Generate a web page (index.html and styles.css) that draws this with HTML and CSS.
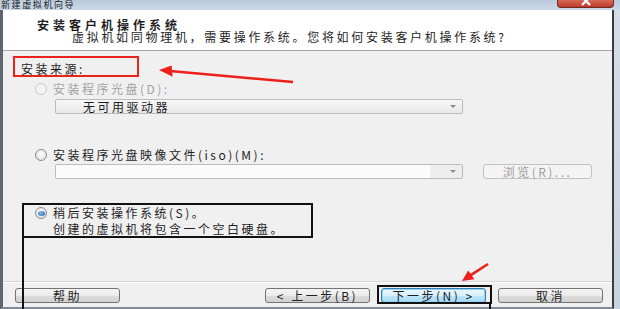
FILE: index.html
```html
<!DOCTYPE html>
<html lang="zh-CN">
<head>
  <meta charset="UTF-8" />
  <title>新建虚拟机向导</title>
  <link rel="stylesheet" href="styles.css">
</head>
<body>

  <div class="window">
    <!-- title bar -->
    <div class="titlebar">
      <span class="caption">新建虚拟机向导</span>
      <span class="close">
        <svg width="14" height="8" viewBox="0 0 14 8"><path d="M3 -3 L11 5 M11 -3 L3 5" stroke="#fff" stroke-width="2.2"/></svg>
      </span>
    </div>

    <div class="client">
      <div class="header">
        <div class="h-title">安装客户机操作系统</div>
        <div class="h-sub">虚拟机如同物理机，需要操作系统。您将如何安装客户机操作系统?</div>
      </div>

      <div class="content">
        <div class="section-label">安装来源:</div>

        <div class="option disabled"><span class="radio"></span>安装程序光盘(D):</div>
        <div class="combo">
          <span class="combo-text">无可用驱动器</span>
          <span class="caret"></span>
        </div>

        <div class="option opt-iso"><span class="radio"></span>安装程序光盘映像文件(iso)(M):</div>
        <div class="combo-row">
          <div class="combo editable"><span class="combo-text"></span><span class="caret"></span></div>
          <div class="btn browse">浏览(R)...</div>
        </div>

        <div class="option opt-later"><span class="radio checked"></span>稍后安装操作系统(S)。</div>
        <div class="option-note">创建的虚拟机将包含一个空白硬盘。</div>
      </div>

      <div class="footer">
        <div class="btn">帮助</div>
        <div class="spacer"></div>
        <div class="btn">&lt; 上一步(B)</div>
        <div class="btn default">下一步(N) &gt;</div>
        <div class="btn">取消</div>
      </div>
    </div>

    <!-- annotations drawn over the screenshot -->
    <div class="mark-red"></div>
    <div class="mark-box box-later"></div>
    <div class="mark-line line-later"></div>
    <div class="mark-box box-next"></div>
    <div class="mark-line line-next"></div>
    <svg class="arrows" width="620" height="309" viewBox="0 0 620 309">
      <line x1="293" y1="82" x2="170" y2="71" stroke="#ee1f1a" stroke-width="2.6"/>
      <polygon points="159,70 171.6,65.4 172.6,76.8" fill="#ee1f1a"/>
      <line x1="488" y1="264" x2="470" y2="275.6" stroke="#ee1f1a" stroke-width="2.6"/>
      <polygon points="462,281 474.4,279.2 468.2,270.4" fill="#ee1f1a"/>
    </svg>
  </div>

</body>
</html>
```

FILE: styles.css
```css
/* === PAGE === */
body {
  margin: 0;
  background: #d9e2ec;
  font-family: "Noto Sans CJK SC", "DejaVu Sans", sans-serif;
  font-size: 12px;
  color: #1e1e1e;
}

.window {
  position: relative;
  width: 620px;
  height: 309px;
  display: flex;
  flex-direction: column;
  background: linear-gradient(#d3deea, #c6d3e1);
  overflow: hidden;
}

/* === TITLE BAR === */
.titlebar {
  height: 10px;
  display: flex;
  align-items: flex-start;
  background: linear-gradient(#bccbdc, #cbd8e6);
}

.caption {
  font-size: 9px;
  line-height: 10px;
  margin-left: 1px;
  letter-spacing: 1.6px;
  color: #1a1a1a;
}

.close {
  margin-left: auto;
  margin-right: 6px;
  width: 57px;
  height: 8px;
  display: flex;
  justify-content: center;
  background: linear-gradient(#d66a56, #c0392b);
  border: 1px solid #6f2a22;
  border-top: none;
  border-radius: 0 0 4px 4px;
  box-sizing: border-box;
}

/* === CLIENT AREA === */
.client {
  flex: 1;
  display: flex;
  flex-direction: column;
  margin-right: 6px;
  background: #f0f0f0;
  border-left: 3px solid #5d6671;
  border-right: 2px solid #3b3b3b;
  border-bottom: 2px solid #7d8a98;
}

.header {
  height: 40px;
  background: #fff;
  border-bottom: 1px solid #a7a7a7;
  padding-left: 34px;
}

.h-title {
  font-weight: bold;
  font-size: 12px;
  letter-spacing: 4px;
  line-height: 13px;
  margin-top: 8px;
}

.h-sub {
  margin-left: 35px;
  line-height: 12px;
  letter-spacing: 2.7px;
}

.content {
  flex: 1;
  padding: 11px 0 0 18px;
  letter-spacing: 2.5px;
}

.section-label {
  line-height: 14px;
}

.option {
  display: flex;
  align-items: center;
  margin-left: 14px;
  line-height: 14px;
  margin-top: 6px;
}

.option.disabled { color: #a3a3a3; }
.option.opt-iso { margin-top: 34px; }
.option.opt-later { margin-top: 27px; }

.radio {
  width: 12px;
  height: 12px;
  box-sizing: border-box;
  border-radius: 50%;
  border: 1px solid #8c8c8c;
  background: radial-gradient(circle at 50% 40%, #ffffff, #d8d8d8);
  margin-right: 6px;
  display: flex;
  align-items: center;
  justify-content: center;
}

.option.disabled .radio {
  border-color: #cacaca;
  background: #f3f3f3;
}

.radio.checked::after {
  content: "";
  width: 7px;
  height: 5px;
  border-radius: 50%;
  background: radial-gradient(circle at 40% 35%, #7fc0ee, #1c5fa8);
}

.combo {
  display: flex;
  align-items: center;
  width: 408px;
  height: 15px;
  margin: 3px 0 0 34px;
  box-sizing: border-box;
  border: 1px solid #bcbcbc;
  border-radius: 2px;
  background: linear-gradient(#f7f7f7, #e8e8e8);
}

.combo-text {
  flex: 1;
  padding-left: 27px;
  line-height: 13px;
}

.caret {
  width: 0;
  height: 0;
  margin-right: 6px;
  border-left: 3px solid transparent;
  border-right: 3px solid transparent;
  border-top: 3px solid #8a8a8a;
}

.combo-row {
  display: flex;
  align-items: center;
  margin-top: 2px;
}

.combo-row .combo { margin-top: 0; }
.combo.editable { background: linear-gradient(90deg, #fbfbfb 92%, #eeeeee 92%); }

.option-note {
  margin: 2px 0 0 32px;
  line-height: 14px;
}

/* === BUTTONS === */
.btn {
  width: 105px;
  height: 15px;
  box-sizing: border-box;
  border: 1px solid #737373;
  border-radius: 3px;
  background: linear-gradient(#f4f4f4 0%, #ebebeb 50%, #dcdcdc 51%, #d2d2d2 100%);
  text-align: center;
  line-height: 13px;
  letter-spacing: 2.5px;
  color: #1e1e1e;
}

.btn.browse {
  width: 109px;
  margin-left: 20px;
  border-color: #c2c2c2;
  background: #f4f4f4;
  color: #9c9c9c;
}

.btn.default {
  border-color: #3a7db3;
  box-shadow: inset 0 0 0 1px #93d3f3;
  background: linear-gradient(#eaf6fd 0%, #d9f0fc 50%, #bee6fd 51%, #a7d9f5 100%);
  margin: 0 12px 0 11px;
}

.footer {
  display: flex;
  padding: 6px 9px 4px 12px;
  border-top: 1px solid #d6d6d6;
  box-shadow: inset 0 1px 0 #ffffff;
}

.spacer { flex: 1; }

/* === ANNOTATIONS === */
.mark-red {
  position: absolute;
  left: 13px;
  top: 56px;
  width: 122px;
  height: 17px;
  border: 2px solid #e8241d;
}

.mark-box {
  position: absolute;
  border: 2px solid #111;
}

.box-later { left: 22px; top: 203px; width: 287px; height: 31px; }
.box-next { left: 377px; top: 285px; width: 111px; height: 15px; }

.mark-line {
  position: absolute;
  width: 2px;
  background: #111;
}

.line-later { left: 22px; top: 236px; height: 80px; }
.line-next { left: 489px; top: 302px; height: 10px; }

.arrows {
  position: absolute;
  left: 0;
  top: 0;
}
```
